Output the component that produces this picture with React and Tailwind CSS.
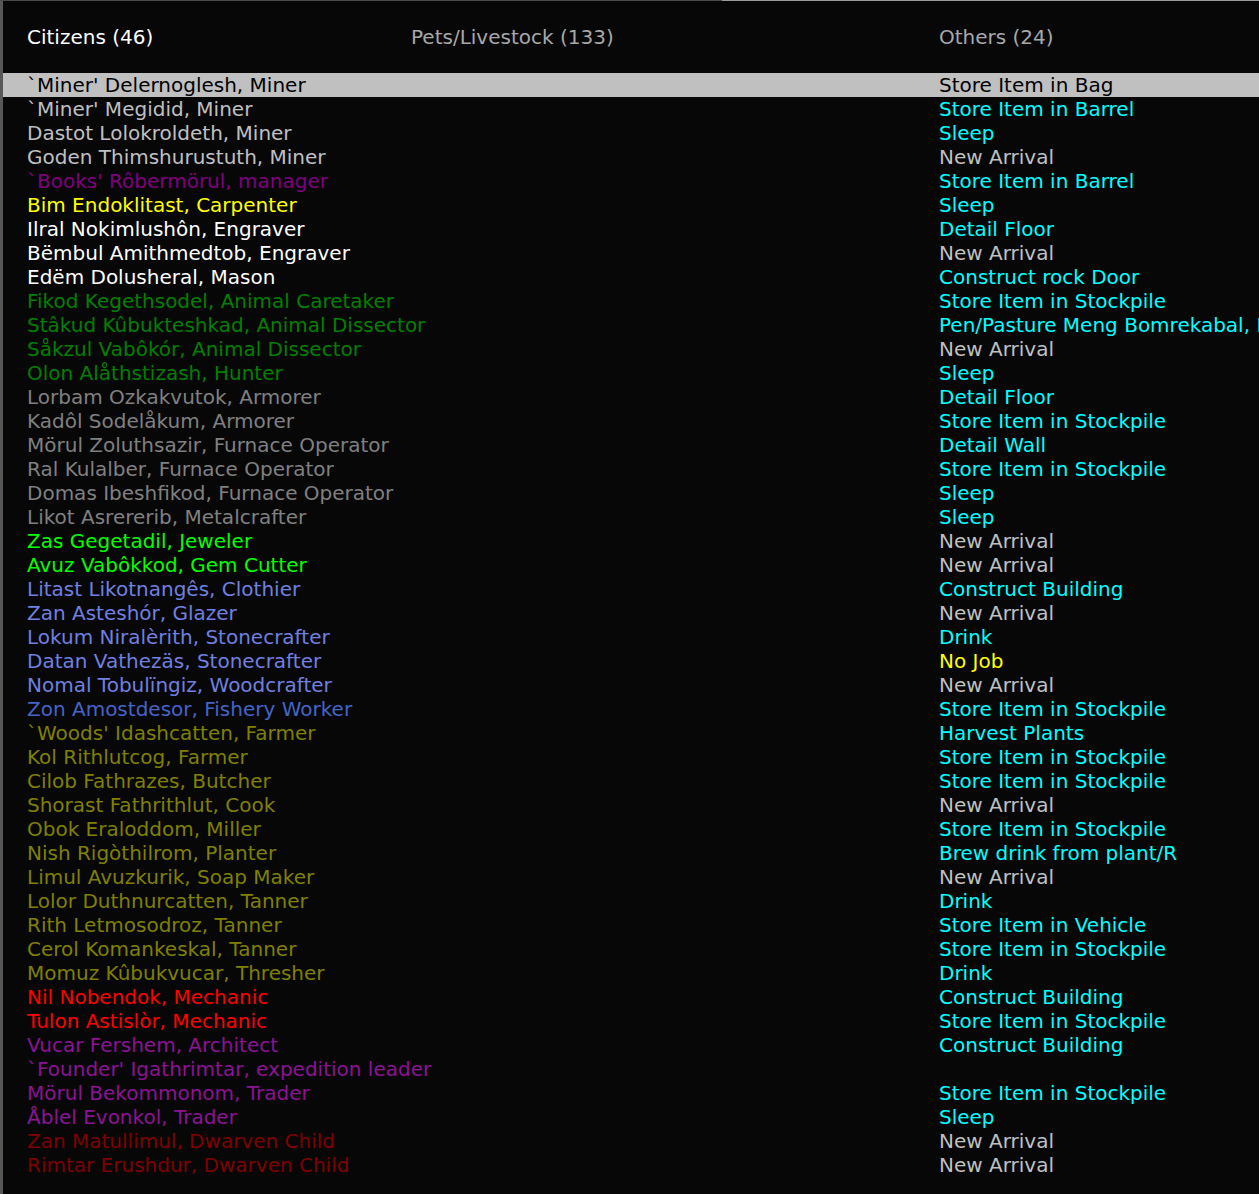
import React from "react";

const C = {
  lgray: "text-[#c0c0c0]",
  dgray: "text-[#808080]",
  white: "text-white",
  magenta: "text-[#800080]",
  purple: "text-[#8c1394]",
  yellow: "text-[#ffff00]",
  green: "text-[#008000]",
  lime: "text-[#00ff00]",
  lblue: "text-[#7080e0]",
  blue: "text-[#4464c8]",
  olive: "text-[#808000]",
  red: "text-[#ff0000]",
  dred: "text-[#800000]",
  cyan: "text-[#00ffff]",
};

const citizens = [
  ["`Miner' Delernoglesh, Miner", "lgray", "Store Item in Bag", "lgray"],
  ["`Miner' Megidid, Miner", "lgray", "Store Item in Barrel", "cyan"],
  ["Dastot Lolokroldeth, Miner", "lgray", "Sleep", "cyan"],
  ["Goden Thimshurustuth, Miner", "lgray", "New Arrival", "lgray"],
  ["`Books' Rôbermörul, manager", "magenta", "Store Item in Barrel", "cyan"],
  ["Bim Endoklitast, Carpenter", "yellow", "Sleep", "cyan"],
  ["Ilral Nokimlushôn, Engraver", "white", "Detail Floor", "cyan"],
  ["Bëmbul Amithmedtob, Engraver", "white", "New Arrival", "lgray"],
  ["Edëm Dolusheral, Mason", "white", "Construct rock Door", "cyan"],
  ["Fikod Kegethsodel, Animal Caretaker", "green", "Store Item in Stockpile", "cyan"],
  ["Stâkud Kûbukteshkad, Animal Dissector", "green", "Pen/Pasture Meng Bomrekabal, Miner", "cyan"],
  ["Såkzul Vabôkór, Animal Dissector", "green", "New Arrival", "lgray"],
  ["Olon Alåthstizash, Hunter", "green", "Sleep", "cyan"],
  ["Lorbam Ozkakvutok, Armorer", "dgray", "Detail Floor", "cyan"],
  ["Kadôl Sodelåkum, Armorer", "dgray", "Store Item in Stockpile", "cyan"],
  ["Mörul Zoluthsazir, Furnace Operator", "dgray", "Detail Wall", "cyan"],
  ["Ral Kulalber, Furnace Operator", "dgray", "Store Item in Stockpile", "cyan"],
  ["Domas Ibeshfikod, Furnace Operator", "dgray", "Sleep", "cyan"],
  ["Likot Asrererib, Metalcrafter", "dgray", "Sleep", "cyan"],
  ["Zas Gegetadil, Jeweler", "lime", "New Arrival", "lgray"],
  ["Avuz Vabôkkod, Gem Cutter", "lime", "New Arrival", "lgray"],
  ["Litast Likotnangês, Clothier", "lblue", "Construct Building", "cyan"],
  ["Zan Asteshór, Glazer", "lblue", "New Arrival", "lgray"],
  ["Lokum Niralèrith, Stonecrafter", "lblue", "Drink", "cyan"],
  ["Datan Vathezäs, Stonecrafter", "lblue", "No Job", "yellow"],
  ["Nomal Tobulïngiz, Woodcrafter", "lblue", "New Arrival", "lgray"],
  ["Zon Amostdesor, Fishery Worker", "blue", "Store Item in Stockpile", "cyan"],
  ["`Woods' Idashcatten, Farmer", "olive", "Harvest Plants", "cyan"],
  ["Kol Rithlutcog, Farmer", "olive", "Store Item in Stockpile", "cyan"],
  ["Cilob Fathrazes, Butcher", "olive", "Store Item in Stockpile", "cyan"],
  ["Shorast Fathrithlut, Cook", "olive", "New Arrival", "lgray"],
  ["Obok Eraloddom, Miller", "olive", "Store Item in Stockpile", "cyan"],
  ["Nish Rigòthilrom, Planter", "olive", "Brew drink from plant/R", "cyan"],
  ["Limul Avuzkurik, Soap Maker", "olive", "New Arrival", "lgray"],
  ["Lolor Duthnurcatten, Tanner", "olive", "Drink", "cyan"],
  ["Rith Letmosodroz, Tanner", "olive", "Store Item in Vehicle", "cyan"],
  ["Cerol Komankeskal, Tanner", "olive", "Store Item in Stockpile", "cyan"],
  ["Momuz Kûbukvucar, Thresher", "olive", "Drink", "cyan"],
  ["Nil Nobendok, Mechanic", "red", "Construct Building", "cyan"],
  ["Tulon Astislòr, Mechanic", "red", "Store Item in Stockpile", "cyan"],
  ["Vucar Fershem, Architect", "purple", "Construct Building", "cyan"],
  ["`Founder' Igathrimtar, expedition leader", "purple", "", "cyan"],
  ["Mörul Bekommonom, Trader", "purple", "Store Item in Stockpile", "cyan"],
  ["Åblel Evonkol, Trader", "purple", "Sleep", "cyan"],
  ["Zan Matullimul, Dwarven Child", "dred", "New Arrival", "lgray"],
  ["Rimtar Erushdur, Dwarven Child", "dred", "New Arrival", "lgray"],
];

export default function App() {
  return (
    <div
      className="w-[1259px] h-[1194px] bg-[#070707] overflow-hidden flex flex-col text-[20px] leading-[24px] whitespace-nowrap"
      style={{ fontFamily: '"DejaVu Sans", sans-serif' }}
    >
      {/* top edge */}
      <div className="flex h-px shrink-0">
        <div className="w-[722px] bg-[#4a4a4a]" />
        <div className="flex-1 bg-[#9a9a9a]" />
      </div>

      <div className="flex flex-1 min-h-0">
        {/* left edge */}
        <div className="w-[3px] bg-[#585858] shrink-0" />

        <div className="flex-1 flex flex-col min-w-0 overflow-hidden">
          {/* tabs */}
          <div className="flex pl-[24px] pt-[24px] h-[72px] shrink-0">
            <div className="w-[384px] text-white">Citizens (46)</div>
            <div className="w-[528px] text-[#a8a8a8]">Pets/Livestock (133)</div>
            <div className="text-[#a8a8a8]">Others (24)</div>
          </div>

          {/* list */}
          <div className="flex flex-col">
            {citizens.map(([name, nc, job, jc], i) => {
              const sel = i === 0;
              return (
                <div
                  key={i}
                  className={`flex h-[24px] pl-[24px] ${sel ? "bg-[#c0c0c0]" : ""}`}
                >
                  <div className={`w-[912px] shrink-0 ${sel ? "text-black" : C[nc]}`}>{name}</div>
                  <div className={sel ? "text-black" : C[jc]}>{job}</div>
                </div>
              );
            })}
          </div>
        </div>
      </div>
    </div>
  );
}
